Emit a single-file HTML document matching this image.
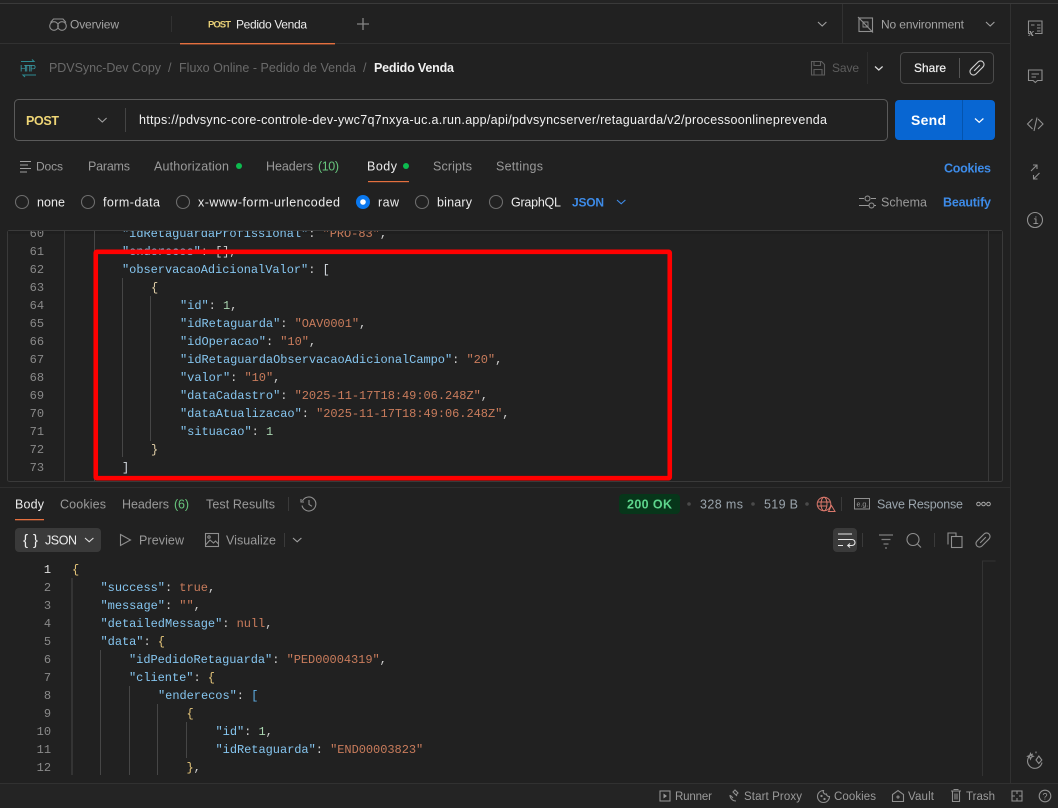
<!DOCTYPE html>
<html><head><meta charset="utf-8"><title>Pedido Venda</title>
<style>
html,body{margin:0;padding:0;background:#212121;width:1058px;height:808px;overflow:hidden}
svg{display:block;position:absolute;left:0;top:0}
text{font-family:"Liberation Sans",sans-serif;font-size:12.5px;white-space:pre}
.g{fill:#a3a3a3}.w{fill:#ececec}.d{fill:#6a6a6a}.b{fill:#3d8be8;font-weight:bold}.gr{fill:#67c47c}.f{fill:#9a9a9a}
.m text,text.m{font-family:"Liberation Mono",monospace;font-size:12px;letter-spacing:-.04px}
.k{fill:#86c6f0}.s{fill:#c97c5c}.n{fill:#a9d5b0}.p{fill:#cfcfcf}.y{fill:#e6c67a}.l{fill:#5fb0e6}.br{fill:#d4dae0}.cb{fill:#e2d0a8}
.ln{fill:#8a8a8a;text-anchor:end}
.i{fill:none;stroke:#8f8f8f;stroke-width:1.1}
.c{fill:none;stroke:#a0a0a0;stroke-width:1.1}
.rule{stroke:#313131;stroke-width:1}
.gd{stroke:#464646;stroke-width:1}
.ft{font-size:11.5px;fill:#9a9a9a}
</style></head><body>
<svg width="1058" height="808" viewBox="0 0 1058 808" xmlns="http://www.w3.org/2000/svg">
<defs>
<clipPath id="req"><rect x="9" y="231" width="975" height="250"/></clipPath>
<clipPath id="res"><rect x="9" y="560" width="970" height="216"/></clipPath>
</defs>
<rect width="1058" height="808" fill="#212121"/>
<!-- structural lines -->
<rect x="0" y="0" width="1058" height="3" fill="#242424"/>
<line x1="0" y1="3.5" x2="1058" y2="3.5" stroke="#3a3a3a"/>
<line x1="0" y1="43.5" x2="1010" y2="43.5" class="rule"/>
<line x1="1010.5" y1="4" x2="1010.5" y2="783" class="rule"/>
<line x1="842.5" y1="4" x2="842.5" y2="43" class="rule"/>
<line x1="171.5" y1="16" x2="171.5" y2="32" class="rule"/>
<rect x="180" y="43" width="155" height="1.4" fill="#e5703f"/>
<rect x="0" y="784" width="1058" height="24" fill="#242424"/>
<line x1="0" y1="783.5" x2="1058" y2="783.5" class="rule"/>

<!-- tab bar -->
<g class="i" stroke-width="1"><circle cx="54" cy="26" r="4.3"/><circle cx="62" cy="26" r="4.3"/><path d="M50.500 22.500l3-3.500h5.500M66 22.500l-3-3.500h-4"/></g>
<text x="70" y="28.500" class="g" style="font-size:12px" textLength="49">Overview</text>
<text x="208" y="27.500" style="font-size:9.500px;font-weight:bold;fill:#e8cf76" textLength="23">POST</text>
<text x="236" y="28.500" class="w" style="font-size:12px" textLength="71">Pedido Venda</text>
<path d="M363 18v12M357 24h12" stroke="#858585" stroke-width="1.300" fill="none"/>
<path d="M818 22l4.200 4 4.200-4" class="c"/>
<g class="i"><rect x="859" y="18" width="13.500" height="13.500"/><path d="M858 17l15 15.500"/><path d="M863 22h5v5h-5z" stroke-width=".9"/></g>
<text x="881" y="28.500" class="g" style="font-size:12px" textLength="83">No environment</text>
<path d="M986 22l4.200 4 4.200-4" class="c"/>

<!-- sidebar icons -->
<g class="i">
<path d="M1030 33.500h-1.500v-12.500h13.500v12.500h-7M1031 25h3.500M1037 25h3.500M1037 28h3.500M1037 31h3.500"/>
<path d="M1028.500 70h13.500v10.500h-4.500l-2.200 2-2.200-2h-4.600zM1031.500 74h7.500M1031.500 77h4.500"/>
<path d="M1032.500 119l-5 5 5 5M1038 119l5 5-5 5M1037 117.500l-3 13.500"/>
<path d="M1031 171l6-6M1033 165h4v4M1039.500 173l-6 6M1037.500 179h-4v-4"/>
<circle cx="1035" cy="220" r="7.500"/>
</g>
<text x="1028.500" y="36" style="font-family:'Liberation Serif',serif;font-size:11px;font-style:italic;font-weight:bold;fill:#a0a0a0">x</text>
<text x="1032.700" y="224" style="font-family:'Liberation Mono',monospace;font-size:10px;fill:#a8a8a8">i</text>
<g class="i"><path d="M1033 754a7.300 7.300 0 1 0 9 8.500"/><path d="M1038.800 756l3 4-3 3.500-2.800-3.500z"/><path d="M1030.500 753.500l.8 2 2 .8-2 .8-.8 2-.8-2-2-.8 2-.8zM1036 751.500v1.800"/></g>

<!-- breadcrumb -->
<g fill="none" stroke="#2d8b92" stroke-width="1.100"><path d="M21 61.500h13l-2-2M36 75h-13l2 2"/></g>
<text x="20" y="71.500" style="font-size:9px;fill:#3a9aa4" textLength="16">HTTP</text>
<text x="49" y="72" class="d" textLength="112">PDVSync-Dev Copy</text>
<text x="168" y="72" class="d">/</text>
<text x="179" y="72" class="d" textLength="177">Fluxo Online - Pedido de Venda</text>
<text x="363" y="72" class="d">/</text>
<text x="374" y="72" style="fill:#f1f1f1;font-weight:bold" textLength="80">Pedido Venda</text>
<g stroke="#5d5d5d" fill="none" stroke-width="1.100"><path d="M811.500 61.500h10l3 3v10.500h-13zM814 61.500v4h6.500v-4M814 75v-5.500h8v5.500"/></g>
<text x="832" y="72" style="fill:#5d5d5d;font-size:12px" textLength="27">Save</text>
<line x1="867.500" y1="52" x2="867.500" y2="84" stroke="#2d2d2d"/>
<path d="M875 66.500l3.800 3.500 3.800-3.500" fill="none" stroke="#dcdcdc" stroke-width="1.200"/>
<rect x="900.500" y="52.500" width="93" height="31" rx="4" fill="none" stroke="#4b4b4b"/>
<text x="914" y="72" style="fill:#f1f1f1;font-size:12px" textLength="32" stroke="#f1f1f1" stroke-width=".2">Share</text>
<line x1="959.500" y1="58" x2="959.500" y2="78" stroke="#555"/>
<g fill="none" stroke="#cfcfcf" stroke-width="1.100" transform="rotate(45 977 68)"><rect x="973.500" y="59.500" width="7" height="17" rx="3.500"/><path d="M977 64v8"/></g>

<!-- URL bar -->
<rect x="14.500" y="99.500" width="873" height="41" rx="4" fill="#212121" stroke="#5a5a5a"/>
<text x="26" y="125" style="font-weight:bold;fill:#efd676" textLength="33">POST</text>
<path d="M98 118l4.300 4 4.300-4" class="c"/>
<line x1="125.500" y1="108" x2="125.500" y2="132" stroke="#444"/>
<text x="139" y="124" style="fill:#f1f1f1" textLength="688">https://pdvsync-core-controle-dev-ywc7q7nxya-uc.a.run.app/api/pdvsyncserver/retaguarda/v2/processoonlineprevenda</text>
<rect x="895" y="100" width="100" height="40" rx="4" fill="#0866d2"/>
<line x1="962.500" y1="100" x2="962.500" y2="140" stroke="#0554ad"/>
<text x="911" y="125" style="font-size:14px;font-weight:bold;fill:#fff" textLength="35">Send</text>
<path d="M975 118.500l4.200 3.800 4.200-3.800" fill="none" stroke="#fff" stroke-width="1.200"/>

<!-- request tabs -->
<path d="M20 161.500h11M20 165h8M20 168.500h11M20 172h7" stroke="#a0a0a0" fill="none"/>
<text x="36" y="170.500" class="f" style="font-size:12px" textLength="27">Docs</text>
<text x="88" y="170.500" class="f" textLength="42">Params</text>
<text x="154" y="170.500" class="f" textLength="75">Authorization</text>
<circle cx="239" cy="166" r="3" fill="#0dbb4f"/>
<text x="266" y="170.500" class="f" textLength="47">Headers</text>
<text x="318" y="170.500" class="gr" textLength="21">(10)</text>
<text x="367" y="170.500" class="w" textLength="30">Body</text>
<circle cx="406" cy="166" r="3" fill="#0dbb4f"/>
<rect x="368" y="181" width="41" height="1.200" fill="#e5703f"/>
<text x="433" y="170.500" class="f" textLength="39">Scripts</text>
<text x="496" y="170.500" class="f" textLength="47">Settings</text>
<text x="944" y="172.500" class="b" textLength="47">Cookies</text>

<!-- radios -->
<g fill="none" stroke="#6d6d6d" stroke-width="1.100">
<circle cx="22" cy="202" r="6.500"/><circle cx="88" cy="202" r="6.500"/><circle cx="183" cy="202" r="6.500"/><circle cx="422" cy="202" r="6.500"/><circle cx="496" cy="202" r="6.500"/>
</g>
<circle cx="363" cy="202" r="7" fill="#0a78ef"/><circle cx="363" cy="202" r="2.800" fill="#fff"/>
<text x="37" y="206.500" class="w" textLength="28">none</text>
<text x="103" y="206.500" class="w" textLength="57">form-data</text>
<text x="198" y="206.500" class="w" textLength="142">x-www-form-urlencoded</text>
<text x="378" y="206.500" class="w" textLength="21">raw</text>
<text x="437" y="206.500" class="w" textLength="35">binary</text>
<text x="511" y="206.500" class="w" textLength="50">GraphQL</text>
<text x="572" y="206.500" class="b" style="font-size:12px" textLength="32">JSON</text>
<path d="M617 200l4.200 3.800 4.200-3.800" fill="none" stroke="#3d8be8" stroke-width="1.100"/>
<g fill="none" stroke="#999" stroke-width="1"><path d="M859 198.500h5M871 198.500h5M859 205.500h10M874 205.500h2"/><circle cx="867.500" cy="198.500" r="2.500"/><circle cx="871.500" cy="205.500" r="2.500"/></g>
<text x="881" y="206.500" class="f" textLength="46">Schema</text>
<text x="943" y="206.500" class="b" textLength="48">Beautify</text>

<!-- request editor -->
<rect x="7.500" y="230.500" width="995" height="251" rx="2" fill="#212121" stroke="#3a3a3a"/>
<rect x="8" y="231" width="994" height="3" fill="#1e1e1e"/>
<line x1="64.500" y1="231" x2="64.500" y2="481" stroke="#3a3a3a"/>
<line x1="94.500" y1="231" x2="94.500" y2="481" class="gd"/>
<line x1="988.500" y1="231" x2="988.500" y2="481" stroke="#3a3a3a"/>
<line x1="122.500" y1="278" x2="122.500" y2="457" class="gd"/>
<line x1="150.500" y1="296" x2="150.500" y2="441" class="gd"/>
<g class="m" clip-path="url(#req)">
<text x="44" y="237" class="ln">60</text><text x="44" y="255" class="ln">61</text><text x="44" y="273" class="ln">62</text><text x="44" y="291" class="ln">63</text><text x="44" y="309" class="ln">64</text><text x="44" y="327" class="ln">65</text><text x="44" y="345" class="ln">66</text><text x="44" y="363" class="ln">67</text><text x="44" y="381" class="ln">68</text><text x="44" y="399" class="ln">69</text><text x="44" y="417" class="ln">70</text><text x="44" y="435" class="ln">71</text><text x="44" y="453" class="ln">72</text><text x="44" y="471" class="ln">73</text>
<text x="122" y="237"><tspan class="k">"idRetaguardaProfissional"</tspan><tspan class="p">: </tspan><tspan class="s">"PRO-83"</tspan><tspan class="p">,</tspan></text>
<text x="122" y="255"><tspan class="k">"enderecos"</tspan><tspan class="p">: [],</tspan></text>
<text x="122" y="273"><tspan class="k">"observacaoAdicionalValor"</tspan><tspan class="p">: </tspan><tspan class="br">[</tspan></text>
<text x="151" y="291" class="cb">{</text>
<text x="180" y="309"><tspan class="k">"id"</tspan><tspan class="p">: </tspan><tspan class="n">1</tspan><tspan class="p">,</tspan></text>
<text x="180" y="327"><tspan class="k">"idRetaguarda"</tspan><tspan class="p">: </tspan><tspan class="s">"OAV0001"</tspan><tspan class="p">,</tspan></text>
<text x="180" y="345"><tspan class="k">"idOperacao"</tspan><tspan class="p">: </tspan><tspan class="s">"10"</tspan><tspan class="p">,</tspan></text>
<text x="180" y="363"><tspan class="k">"idRetaguardaObservacaoAdicionalCampo"</tspan><tspan class="p">: </tspan><tspan class="s">"20"</tspan><tspan class="p">,</tspan></text>
<text x="180" y="381"><tspan class="k">"valor"</tspan><tspan class="p">: </tspan><tspan class="s">"10"</tspan><tspan class="p">,</tspan></text>
<text x="180" y="399"><tspan class="k">"dataCadastro"</tspan><tspan class="p">: </tspan><tspan class="s">"2025-11-17T18:49:06.248Z"</tspan><tspan class="p">,</tspan></text>
<text x="180" y="417"><tspan class="k">"dataAtualizacao"</tspan><tspan class="p">: </tspan><tspan class="s">"2025-11-17T18:49:06.248Z"</tspan><tspan class="p">,</tspan></text>
<text x="180" y="435"><tspan class="k">"situacao"</tspan><tspan class="p">: </tspan><tspan class="n">1</tspan></text>
<text x="151" y="453" class="cb">}</text>
<text x="122" y="471" class="br">]</text>
</g>
<rect x="95.750" y="251.800" width="574" height="226.400" rx="1" fill="none" stroke="#ff0000" stroke-width="4.600"/>

<line x1="0" y1="487.500" x2="1010" y2="487.500" stroke="#2e2e2e"/>

<!-- response tabs -->
<text x="15" y="508.500" class="w" textLength="29">Body</text>
<rect x="15" y="519" width="29" height="1.300" fill="#e5703f"/>
<text x="60" y="508.500" class="f" textLength="46">Cookies</text>
<text x="122" y="508.500" class="f" textLength="47">Headers</text>
<text x="174" y="508.500" class="gr" textLength="15">(6)</text>
<text x="206" y="508.500" class="f" textLength="69">Test Results</text>
<line x1="288.500" y1="497" x2="288.500" y2="511" stroke="#3a3a3a"/>
<g class="i"><path d="M302.500 501a7 7 0 1 1 -.500 4.500M301 499v3h3M309 500v4.500l3 1.800"/></g>
<rect x="619" y="494" width="61" height="20" rx="4" fill="#07361a"/>
<text x="627" y="508.500" style="fill:#5dd58c;font-weight:bold" textLength="45">200 OK</text>
<circle cx="689" cy="504" r="1.800" fill="#4a4a4a"/>
<text x="700" y="508.500" fill="#9ba5ad" textLength="43">328 ms</text>
<circle cx="753" cy="504" r="1.800" fill="#4a4a4a"/>
<text x="764" y="508.500" fill="#9ba5ad" textLength="34">519 B</text>
<circle cx="807" cy="504" r="1.800" fill="#4a4a4a"/>
<g fill="none" stroke="#d9776b" stroke-width="1"><circle cx="824" cy="504" r="6.800"/><ellipse cx="824" cy="504" rx="3" ry="6.800"/><path d="M817.500 502h13M817.500 506h9"/><path d="M828.500 511.500l3-6 3.500 6z" fill="#212121"/></g>
<line x1="841.500" y1="497" x2="841.500" y2="511" stroke="#3a3a3a"/>
<rect x="854.500" y="498.500" width="15" height="10.500" fill="none" stroke="#8f8f8f"/>
<text x="856.500" y="506.500" style="font-size:7px;fill:#9a9a9a">e.g.</text>
<text x="877" y="508.500" fill="#9ba5ad" textLength="86">Save Response</text>
<g fill="none" stroke="#aaa" stroke-width="1"><circle cx="978.500" cy="504" r="1.800"/><circle cx="983.500" cy="504" r="1.800"/><circle cx="988.500" cy="504" r="1.800"/></g>

<!-- response toolbar -->
<rect x="15" y="528" width="86" height="24" rx="4" fill="#3a3a3a"/>
<text x="23" y="545" style="font-size:15px;fill:#efefef" textLength="15">{ }</text>
<text x="45" y="544.500" class="w" textLength="32">JSON</text>
<path d="M85 538l4.200 3.800 4.200-3.800" fill="none" stroke="#ddd" stroke-width="1.100"/>
<path d="M120.500 534.500l10 5.500-10 5.500z" class="i"/>
<text x="139" y="544.500" class="f" textLength="45">Preview</text>
<g class="i"><rect x="205.500" y="533.500" width="13" height="13"/><path d="M205.500 545l4.500-5 3.500 3 2-2 3 3"/><circle cx="209" cy="537" r="1.200"/></g>
<text x="226" y="544.500" class="f" textLength="50">Visualize</text>
<line x1="284.500" y1="533" x2="284.500" y2="547" stroke="#3a3a3a"/>
<path d="M293 538l4.200 3.800 4.200-3.800" class="c"/>
<rect x="833" y="528" width="24" height="24" rx="4" fill="#3a3a3a"/>
<g fill="none" stroke="#e6e6e6" stroke-width="1.100"><path d="M838 534h14M838 539.500h14a2.300 2.300 0 0 1 0 6h-4M850 543.500l-2.300 2 2.300 2M838 545.500h5"/></g>
<line x1="862.500" y1="533" x2="862.500" y2="547" stroke="#3a3a3a"/>
<path d="M879 535h14M881.500 539.500h9M883.500 544h5M885 548h2" fill="none" stroke="#7d7d7d" stroke-width="1.200"/>
<g class="i" stroke-width="1.200"><circle cx="913" cy="539.500" r="6"/><path d="M917.500 544l3.500 3.500"/></g>
<line x1="934.500" y1="533" x2="934.500" y2="547" stroke="#3a3a3a"/>
<g class="i"><path d="M948.500 544h-.5v-11h8v3"/><rect x="951.500" y="536.500" width="10.500" height="11"/></g>
<g class="i" transform="rotate(45 983 540)"><rect x="979.500" y="531.500" width="7" height="17" rx="3.500"/><path d="M983 536v8"/></g>

<!-- response editor -->
<line x1="72" y1="578" x2="72" y2="775" class="gd"/>
<line x1="100.500" y1="650" x2="100.500" y2="775" class="gd"/>
<line x1="129.500" y1="686" x2="129.500" y2="775" class="gd"/>
<line x1="157.500" y1="704" x2="157.500" y2="775" class="gd"/>
<line x1="186.500" y1="722" x2="186.500" y2="758" class="gd"/>
<path d="M982.500 776v-215h13" fill="none" stroke="#333"/>
<g class="m" clip-path="url(#res)">
<text x="51" y="573" class="ln" style="fill:#e0e0e0">1</text><text x="51" y="591" class="ln">2</text><text x="51" y="609" class="ln">3</text><text x="51" y="627" class="ln">4</text><text x="51" y="645" class="ln">5</text><text x="51" y="663" class="ln">6</text><text x="51" y="681" class="ln">7</text><text x="51" y="699" class="ln">8</text><text x="51" y="717" class="ln">9</text><text x="51" y="735" class="ln">10</text><text x="51" y="753" class="ln">11</text><text x="51" y="771" class="ln">12</text>
<text x="72" y="573" class="y">{</text>
<text x="100.500" y="591"><tspan class="k">"success"</tspan><tspan class="p">: </tspan><tspan class="s">true</tspan><tspan class="p">,</tspan></text>
<text x="100.500" y="609"><tspan class="k">"message"</tspan><tspan class="p">: </tspan><tspan class="s">""</tspan><tspan class="p">,</tspan></text>
<text x="100.500" y="627"><tspan class="k">"detailedMessage"</tspan><tspan class="p">: </tspan><tspan class="s">null</tspan><tspan class="p">,</tspan></text>
<text x="100.500" y="645"><tspan class="k">"data"</tspan><tspan class="p">: </tspan><tspan class="y">{</tspan></text>
<text x="129" y="663"><tspan class="k">"idPedidoRetaguarda"</tspan><tspan class="p">: </tspan><tspan class="s">"PED00004319"</tspan><tspan class="p">,</tspan></text>
<text x="129" y="681"><tspan class="k">"cliente"</tspan><tspan class="p">: </tspan><tspan class="y">{</tspan></text>
<text x="158" y="699"><tspan class="k">"enderecos"</tspan><tspan class="p">: </tspan><tspan class="l">[</tspan></text>
<text x="186.500" y="717" class="y">{</text>
<text x="215.500" y="735"><tspan class="k">"id"</tspan><tspan class="p">: </tspan><tspan class="n">1</tspan><tspan class="p">,</tspan></text>
<text x="215.500" y="753"><tspan class="k">"idRetaguarda"</tspan><tspan class="p">: </tspan><tspan class="s">"END00003823"</tspan></text>
<text x="186.500" y="771"><tspan class="y">}</tspan><tspan class="p">,</tspan></text>
</g>

<!-- footer -->
<g class="i" stroke-width="1"><rect x="660" y="791" width="10" height="10"/></g><path d="M663.500 793.500l3.500 2.500-3.500 2.500z" fill="#9a9a9a"/>
<text x="675" y="800" class="ft" textLength="37">Runner</text>
<g class="i" stroke-width="1"><path d="M730 795a6 6 0 0 0 6 6M733 792l4 4M735 790l3 3-2 2-3-3zM733 798l-2.500-2.500"/></g>
<text x="744" y="800" class="ft" textLength="58">Start Proxy</text>
<g class="i" stroke-width="1"><path d="M823.500 790.500a6 6 0 1 0 6 6 2.500 2.500 0 0 1-3-2.500 2.500 2.500 0 0 1-3-3.500z"/><circle cx="821.500" cy="796" r=".6"/><circle cx="824.500" cy="799" r=".6"/></g>
<text x="834" y="800" class="ft" textLength="42">Cookies</text>
<g class="i" stroke-width="1"><path d="M892.500 801.500v-7l5.500-4 5.500 4v7z"/><circle cx="898" cy="797" r="1"/></g>
<text x="908" y="800" class="ft" textLength="26">Vault</text>
<g class="i" stroke-width="1"><path d="M951 791h10M953.500 789.500h5M952.500 791.500v10h7v-10M955 793.500v6M957 793.500v6"/></g>
<text x="966" y="800" class="ft" textLength="29">Trash</text>
<g class="i" stroke-width="1"><rect x="1012" y="791" width="10" height="10"/><path d="M1017 791v3M1017 798v3M1012 796h3M1019 796h3"/></g>
<circle cx="1045" cy="796" r="5.800" class="i"/>
<text x="1042.500" y="799.500" style="font-size:9px;fill:#9a9a9a">?</text>
</svg>
</body></html>
